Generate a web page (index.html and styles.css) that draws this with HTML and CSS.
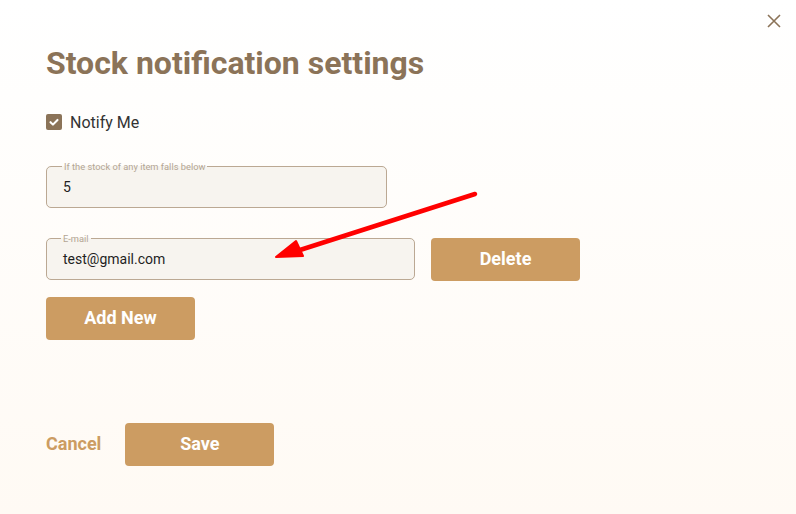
FILE: index.html
```html
<!DOCTYPE html>
<html>
<head>
<meta charset="utf-8">
<link rel="stylesheet" href="styles.css">
</head>
<body>
<div class="dialog">
  <button class="close" aria-label="Close">
    <svg width="14" height="14" viewBox="0 0 14 14"><path d="M1 1L13 13M13 1L1 13" stroke="#8b7358" stroke-width="1.6" fill="none"/></svg>
  </button>
  <h1 class="title">Stock notification settings</h1>
  <label class="check">
    <span class="box"><svg width="16" height="16" viewBox="0 0 16 16"><path d="M4 8.2L6.8 11L12 5.6" stroke="#fff" stroke-width="2.4" fill="none" stroke-linecap="round" stroke-linejoin="round"/></svg></span>
    <span class="check-label">Notify Me</span>
  </label>
  <fieldset class="field field-short">
    <legend>If the stock of any item falls below</legend>
    <span class="value">5</span>
  </fieldset>
  <div class="row">
    <fieldset class="field field-email">
      <legend>E-mail</legend>
      <span class="value">test@gmail.com</span>
    </fieldset>
    <button class="btn">Delete</button>
  </div>
  <button class="btn btn-add">Add New</button>
  <div class="actions">
    <button class="link">Cancel</button>
    <button class="btn">Save</button>
  </div>
  <svg class="arrow" width="796" height="514" viewBox="0 0 796 514">
    <path d="M475 194L300 250" stroke="#f00" stroke-width="4.5" stroke-linecap="round" fill="none"/>
    <path d="M276 257L296 241L303 256Z" fill="#f00" stroke="#f00" stroke-width="2" stroke-linejoin="round"/>
  </svg>
</div>
</body>
</html>
```
FILE: styles.css
```css
html, body { margin: 0; padding: 0; }
body {
  width: 796px;
  height: 514px;
  overflow: hidden;
  font-family: Roboto, "Liberation Sans", sans-serif;
  background: linear-gradient(to bottom, #ffffff 0%, #fffaf4 100%);
}
.dialog {
  position: relative;
  box-sizing: border-box;
  width: 796px;
  height: 514px;
  padding: 43px 46px 0 46px;
}
.close {
  position: absolute;
  top: 14px;
  right: 15px;
  border: 0;
  background: none;
  padding: 0;
  width: 14px;
  height: 14px;
  line-height: 0;
}
.title {
  margin: 0;
  font-size: 32px;
  line-height: 40px;
  font-weight: 700;
  color: #8b7358;
}
.check {
  display: flex;
  align-items: center;
  gap: 8px;
  margin-top: 29px;
  height: 20px;
}
.box {
  width: 16px;
  height: 16px;
  border-radius: 2px;
  background: #8b7358;
  display: flex;
  align-items: center;
  justify-content: center;
}
.box svg { width: 14px; height: 14px; }
.check-label {
  font-size: 16px;
  color: #333;
}
.field {
  box-sizing: border-box;
  margin: 0;
  border: 1px solid #bba893;
  border-radius: 5px;
  background: #f7f4ef;
  height: 47px;
  padding: 0 16px;
  display: flex;
  align-items: center;
}
.field legend {
  font-size: 9.3px;
  color: #b3a593;
  padding: 0 2px;
  margin-left: -1px;
  line-height: 11px;
}
.field .value {
  font-size: 14px;
  color: #1f1f1f;
  margin-top: -6px;
}
.field-short {
  width: 341px;
  margin-top: 29px;
}
.row {
  display: flex;
  align-items: flex-end;
  gap: 16px;
  margin-top: 25px;
}
.field-email {
  width: 369px;
}
.field-email legend { margin-left: -2px; }
.btn {
  box-sizing: border-box;
  width: 149px;
  height: 43px;
  border: 0;
  border-radius: 4px;
  background: #cc9c62;
  color: #fff;
  font-family: Roboto, "Liberation Sans", sans-serif;
  font-weight: 700;
  font-size: 18px;
  padding: 0 0 2px 0;
  cursor: pointer;
}
.row .btn { margin-bottom: -1px; }
.btn-add {
  display: block;
  margin-top: 17px;
}
.actions {
  display: flex;
  align-items: center;
  gap: 24px;
  margin-top: 83px;
}
.link {
  border: 0;
  background: none;
  padding: 0 0 2px 0;
  color: #cc9c62;
  font-family: Roboto, "Liberation Sans", sans-serif;
  font-weight: 700;
  font-size: 18px;
}
.arrow {
  position: absolute;
  left: 0;
  top: 0;
  pointer-events: none;
}
```
